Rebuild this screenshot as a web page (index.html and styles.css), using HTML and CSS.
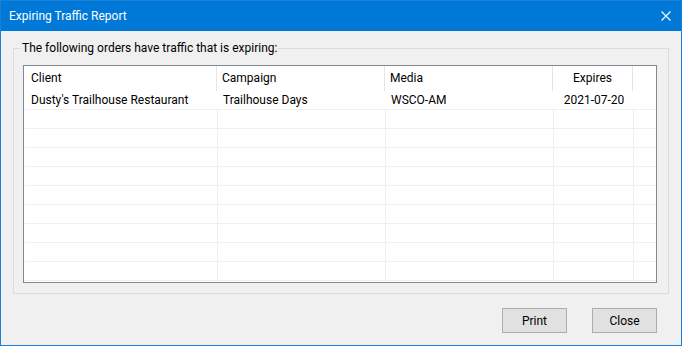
FILE: index.html
```html
<!DOCTYPE html>
<html lang="en">
<head>
    <meta charset="UTF-8">
    <meta name="viewport" content="width=device-width, initial-scale=1.0">
    <title>Expiring Traffic Report</title>
    <link rel="stylesheet" href="styles.css">
</head>
<body>
    <div class="window">
        <div class="titlebar">
            <span class="title">Expiring Traffic Report</span>
            <svg class="close-x" width="10" height="10" viewBox="0 0 10 10">
                <path d="M0.5 0.5 L9.5 9.5 M9.5 0.5 L0.5 9.5" stroke="#fff" stroke-width="1.1" />
            </svg>
        </div>

        <div class="content">
            <fieldset class="group">
                <legend>The following orders have traffic that is expiring:</legend>

                <div class="listview">
                    <div class="row header">
                        <div class="cell">Client</div>
                        <div class="cell">Campaign</div>
                        <div class="cell">Media</div>
                        <div class="cell center">Expires</div>
                        <div class="cell last"></div>
                    </div>
                    <div class="row item focused">
                        <div class="cell">Dusty's Trailhouse Restaurant</div>
                        <div class="cell">Trailhouse Days</div>
                        <div class="cell">WSCO-AM</div>
                        <div class="cell center">2021-07-20</div>
                        <div class="cell last"></div>
                    </div>
                    <!-- empty grid rows -->
                    <div class="row item"><div class="cell"></div><div class="cell"></div><div class="cell"></div><div class="cell"></div><div class="cell last"></div></div>
                    <div class="row item"><div class="cell"></div><div class="cell"></div><div class="cell"></div><div class="cell"></div><div class="cell last"></div></div>
                    <div class="row item"><div class="cell"></div><div class="cell"></div><div class="cell"></div><div class="cell"></div><div class="cell last"></div></div>
                    <div class="row item"><div class="cell"></div><div class="cell"></div><div class="cell"></div><div class="cell"></div><div class="cell last"></div></div>
                    <div class="row item"><div class="cell"></div><div class="cell"></div><div class="cell"></div><div class="cell"></div><div class="cell last"></div></div>
                    <div class="row item"><div class="cell"></div><div class="cell"></div><div class="cell"></div><div class="cell"></div><div class="cell last"></div></div>
                    <div class="row item"><div class="cell"></div><div class="cell"></div><div class="cell"></div><div class="cell"></div><div class="cell last"></div></div>
                    <div class="row item"><div class="cell"></div><div class="cell"></div><div class="cell"></div><div class="cell"></div><div class="cell last"></div></div>
                    <div class="row item"><div class="cell"></div><div class="cell"></div><div class="cell"></div><div class="cell"></div><div class="cell last"></div></div>
                </div>
            </fieldset>

            <div class="buttons">
                <button class="btn">Print</button>
                <button class="btn">Close</button>
            </div>
        </div>
    </div>
</body>
</html>
```

FILE: styles.css
```css
* {
    margin: 0;
    padding: 0;
    box-sizing: border-box;
}

body, html {
    font-family: Roboto, "Noto Sans", sans-serif;
    font-size: 12px;
    color: #000;
    background: #f0f0f0;
}

/* window frame */
.window {
    width: 682px;
    height: 346px;
    border: 1px solid #1c7fd8;
    background: #f0f0f0;
    display: flex;
    flex-direction: column;
}

.titlebar {
    height: 30px;
    background: #0078d7;
    color: #fff;
    display: flex;
    align-items: center;
    justify-content: space-between;
    padding: 0 10px 0 8px;
}

.title {
    line-height: 30px;
}

.close-x {
    display: block;
    margin-top: -1px;
}

.content {
    flex: 1;
    padding: 17px 12px 0 12px;
}

/* group box */
.group {
    border: 1px solid #dcdcdc;
    height: 253px;
    padding: 0 11px 10px 9px;
    margin-top: -7px;
}

.group legend {
    margin-left: -2px;
    padding: 0 1px;
    line-height: 14px;
}

/* list view */
.listview {
    border: 1px solid #828790;
    background: #fff;
    height: 218px;
    margin-top: 10px;
}

.row {
    display: grid;
    grid-template-columns: 193px 168px 168px 80px 1fr;
}

.header {
    height: 25px;
}

.header .cell {
    line-height: 24px;
    border-right: 1px solid #e5e5e5;
}

.item {
    height: 19px;
    margin-left: 1px;
    border-bottom: 1px solid #f0f0f0;
}

.item .cell {
    line-height: 18px;
    border-right: 1px solid #f0f0f0;
}

.cell {
    padding-left: 5px;
    white-space: nowrap;
    overflow: hidden;
}

.row .cell:first-child {
    padding-left: 6px;
}

.header .cell:first-child {
    padding-left: 7px;
}

.cell.center {
    text-align: center;
    padding-left: 0;
}

.row .cell.last,
.item.focused .cell {
    border-right: none;
}

/* buttons */
.buttons {
    display: flex;
    justify-content: flex-end;
    gap: 25px;
    padding-right: 12px;
    margin-top: 14px;
}

.btn {
    width: 65px;
    height: 25px;
    border: 1px solid #adadad;
    background: #e1e1e1;
    font-family: inherit;
    font-size: 12px;
    color: #000;
}
```
